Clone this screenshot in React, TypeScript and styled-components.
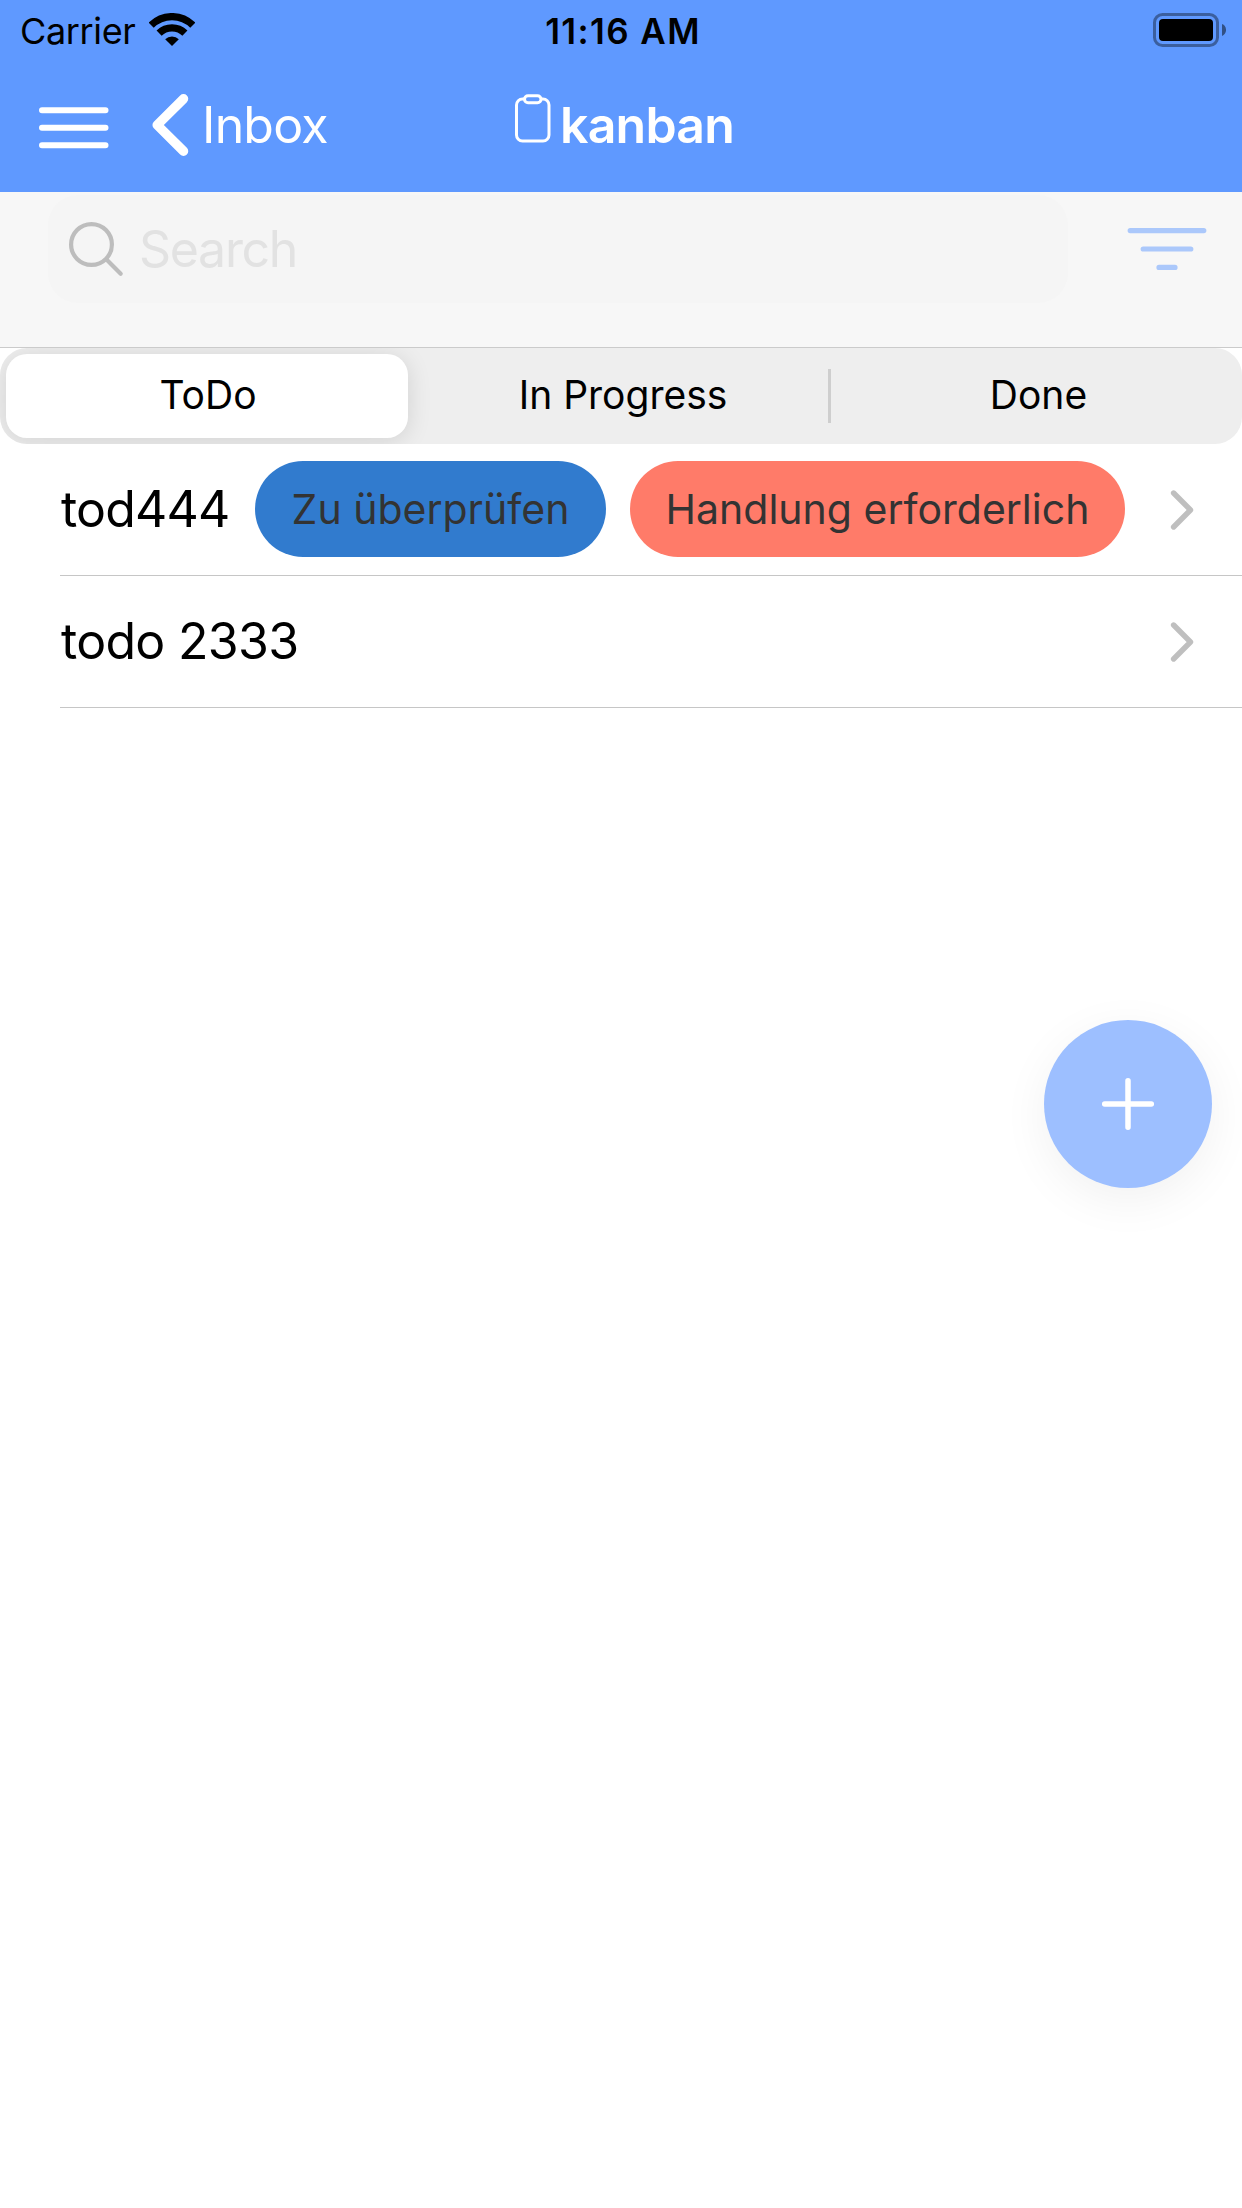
import React from "react";
import styled, { createGlobalStyle } from "styled-components";

const GlobalStyle = createGlobalStyle`
  * { box-sizing: border-box; }
  body { margin: 0; background: #fefefe; font-family: Inter, "Liberation Sans", sans-serif; }
  svg { display: block; flex: none; }
`;

const Screen = styled.main`
  display: flex;
  flex-direction: column;
  width: 1242px;
  height: 2208px;
  overflow: hidden;
  background: #fff;
`;

const Label = styled.span<{ $size: number; $spacing?: number; $weight?: number; $color?: string }>`
  font-size: ${(p) => p.$size}px;
  letter-spacing: ${(p) => p.$spacing ?? 0}px;
  font-weight: ${(p) => p.$weight ?? 400};
  color: ${(p) => p.$color ?? "#000"};
  line-height: 1.2;
  white-space: nowrap;
`;

const Header = styled.header`
  height: 192px;
  background: #5f99ff;
`;

const StatusBar = styled.div`
  display: grid;
  grid-template-columns: 1fr auto 1fr;
  align-items: center;
  height: 62px;
  padding: 0 16px 0 20px;
`;

const Carrier = styled.div`
  display: flex;
  align-items: center;
  justify-content: space-between;
  width: 175px;
  > span { padding-top: 2px; }
  > svg { margin-bottom: 2px; }
`;

const Battery = styled.div`
  display: flex;
  justify-content: flex-end;
  padding-bottom: 2px;
`;

const NavBar = styled.nav`
  display: grid;
  grid-template-columns: 1fr auto 1fr;
  height: 126px;
  align-items: center;
  padding: 0 39px;
`;

const NavLeft = styled.div`
  display: flex;
  align-items: center;
  > svg { margin-top: 5px; }
`;

const BackButton = styled.a`
  display: flex;
  align-items: center;
  gap: 13px;
  margin-left: 43px;
`;

const Title = styled.h1`
  display: flex;
  align-items: center;
  gap: 9px;
  margin: 0 0 0 7px;
  svg { margin-bottom: 13px; }
`;

const SearchBar = styled.section`
  display: flex;
  align-items: flex-start;
  justify-content: space-between;
  height: 156px;
  padding: 3px 35px 0 48px;
  background: #f7f7f7;
  border-bottom: 1px solid #cbcbcb;
`;

const SearchField = styled.div`
  display: flex;
  align-items: center;
  width: 1020px;
  height: 108px;
  padding-left: 20px;
  gap: 15px;
  border-radius: 30px;
  background: #f5f5f5;
`;

const FilterButton = styled.div`
  display: flex;
  align-items: center;
  height: 108px;
`;

const Segments = styled.div`
  display: grid;
  grid-template-columns: 402px 420px 3px 1fr;
  align-items: center;
  height: 96px;
  padding: 6px;
  overflow: hidden;
  border-radius: 27px;
  background: #eeeeee;
`;

const Segment = styled.div<{ $active?: boolean }>`
  display: flex;
  align-items: center;
  justify-content: center;
  height: 84px;
  padding-bottom: 2px;
  border-radius: 21px;
  background: ${(p) => (p.$active ? "#fff" : "transparent")};
  box-shadow: ${(p) => (p.$active ? "0 3px 24px rgba(0, 0, 0, 0.12)" : "none")};
  > span { padding-left: ${(p) => (p.$active ? 2 : 10)}px; }
`;

const Divider = styled.i`
  width: 3px;
  height: 54px;
  background: #cecece;
`;

const List = styled.ul`
  margin: 0;
  padding: 0 0 0 60px;
  list-style: none;
`;

const Row = styled.li`
  display: flex;
  align-items: center;
  height: 132px;
  padding: 0 48px 1px 0;
  border-bottom: 1px solid #c6c6c6;
  > svg { margin: 2px 0 0 auto; }
`;

const RowName = styled.div`
  display: flex;
  min-width: 195px;
  padding-left: 1px;
`;

const Tag = styled.div<{ $bg: string; $width: number }>`
  display: flex;
  align-items: center;
  justify-content: center;
  width: ${(p) => p.$width}px;
  height: 96px;
  padding-top: 2px;
  margin-right: 24px;
  border-radius: 48px;
  background: ${(p) => p.$bg};
`;

const AddButton = styled.button`
  position: absolute;
  left: 1044px;
  top: 1020px;
  display: flex;
  align-items: center;
  justify-content: center;
  width: 168px;
  height: 168px;
  padding: 0;
  border: 0;
  border-radius: 50%;
  background: #9dbfff;
  box-shadow: 0 12px 48px rgba(0, 0, 0, 0.06);
`;

const WifiIcon = () => (
  <svg width="46" height="34" viewBox="149 13 46 34">
    <path d="M172 46L165.2 39.2A9.7 9.7 0 0 1 178.8 39.2Z" />
    <path d="M159.1 33.1A18.3 18.3 0 0 1 184.9 33.1M151.2 25.2A29.4 29.4 0 0 1 192.8 25.2" fill="none" stroke="#000" strokeWidth="7.2" />
  </svg>
);

const BatteryIcon = () => (
  <svg width="73" height="34" viewBox="0 0 73 34">
    <rect x="1.5" y="1.5" width="63" height="31" rx="8" fill="none" stroke="#000" strokeOpacity="0.38" strokeWidth="3" />
    <rect x="6" y="6" width="54" height="22" rx="4" />
    <path d="M69 11C74.4 13 74.4 21 69 23Z" fillOpacity="0.48" />
  </svg>
);

const MenuIcon = () => (
  <svg width="70" height="42" viewBox="0 0 70 42" stroke="#fff" strokeWidth="6" strokeLinecap="round">
    <path d="M3 3.2H66.5M3 20.7H66.5M3 38.2H66.5" />
  </svg>
);

const BackIcon = () => (
  <svg width="37" height="62" viewBox="0 0 37 62" fill="none" stroke="#fff" strokeWidth="9.5" strokeLinecap="round" strokeLinejoin="round">
    <path d="M31.5 4.8L5.2 31L31.5 57.2" />
  </svg>
);

const ClipboardIcon = () => (
  <svg width="36" height="49" viewBox="0 0 36 49" fill="none" stroke="#fff" strokeWidth="3">
    <path d="M9 5H7.5A6 6 0 0 0 1.5 11V41A6 6 0 0 0 7.5 47H28A6 6 0 0 0 34 41V11A6 6 0 0 0 28 5H26.5" />
    <rect x="9.5" y="1.7" width="16.5" height="7" rx="3.5" />
  </svg>
);

const SearchIcon = () => (
  <svg width="56" height="56" viewBox="0 0 56 56" fill="none" stroke="#bdbdbd" strokeWidth="4.2" strokeLinecap="round">
    <circle cx="23.5" cy="23.5" r="20.4" />
    <path d="M39 39L52.7 52.7" />
  </svg>
);

const FilterIcon = () => (
  <svg width="80" height="44" viewBox="0 0 80 44" stroke="#abc8fb" strokeWidth="5.2" strokeLinecap="round">
    <path d="M3.2 3.6H76.8M16.2 22H63.8M32 40.4H48" />
  </svg>
);

const ChevronIcon = () => (
  <svg width="24" height="42" viewBox="0 0 24 42" fill="none" stroke="#bfbfbf" strokeWidth="5.4" strokeLinecap="round" strokeLinejoin="round">
    <path d="M3.6 4L20.5 21L3.6 38" />
  </svg>
);

const PlusIcon = () => (
  <svg width="54" height="54" viewBox="0 0 54 54" stroke="#fff" strokeWidth="5.5" strokeLinecap="round">
    <path d="M27 3.7V50.3M3.7 27H50.3" />
  </svg>
);

export default function App() {
  return (
    <Screen>
      <GlobalStyle />
      <Header>
        <StatusBar>
          <Carrier>
            <Label $size={36} $spacing={-0.35}>Carrier</Label>
            <WifiIcon />
          </Carrier>
          <Label $size={35} $weight={600} $spacing={1.4}>11:16 AM</Label>
          <Battery><BatteryIcon /></Battery>
        </StatusBar>
        <NavBar>
          <NavLeft>
            <MenuIcon />
            <BackButton>
              <BackIcon />
              <Label $size={50} $spacing={-0.8} $color="#fff">Inbox</Label>
            </BackButton>
          </NavLeft>
          <Title>
            <ClipboardIcon />
            <Label $size={50} $weight={600} $spacing={-0.8} $color="#fff">kanban</Label>
          </Title>
        </NavBar>
      </Header>
      <SearchBar>
        <SearchField>
          <SearchIcon />
          <Label $size={50} $spacing={-1.3} $color="#e2e2e2">Search</Label>
        </SearchField>
        <FilterButton><FilterIcon /></FilterButton>
      </SearchBar>
      <Segments>
        <Segment $active><Label $size={39}>ToDo</Label></Segment>
        <Segment><Label $size={39}>In Progress</Label></Segment>
        <Divider />
        <Segment><Label $size={39}>Done</Label></Segment>
      </Segments>
      <List>
        <Row>
          <RowName><Label $size={50} $spacing={-0.8}>tod444</Label></RowName>
          <Tag $bg="#317bce" $width={351}><Label $size={41} $color="#333">Zu überprüfen</Label></Tag>
          <Tag $bg="#ff7b69" $width={495}><Label $size={41} $color="#333">Handlung erforderlich</Label></Tag>
          <ChevronIcon />
        </Row>
        <Row>
          <RowName><Label $size={50} $spacing={-0.7}>todo 2333</Label></RowName>
          <ChevronIcon />
        </Row>
      </List>
      <AddButton aria-label="Add"><PlusIcon /></AddButton>
    </Screen>
  );
}
